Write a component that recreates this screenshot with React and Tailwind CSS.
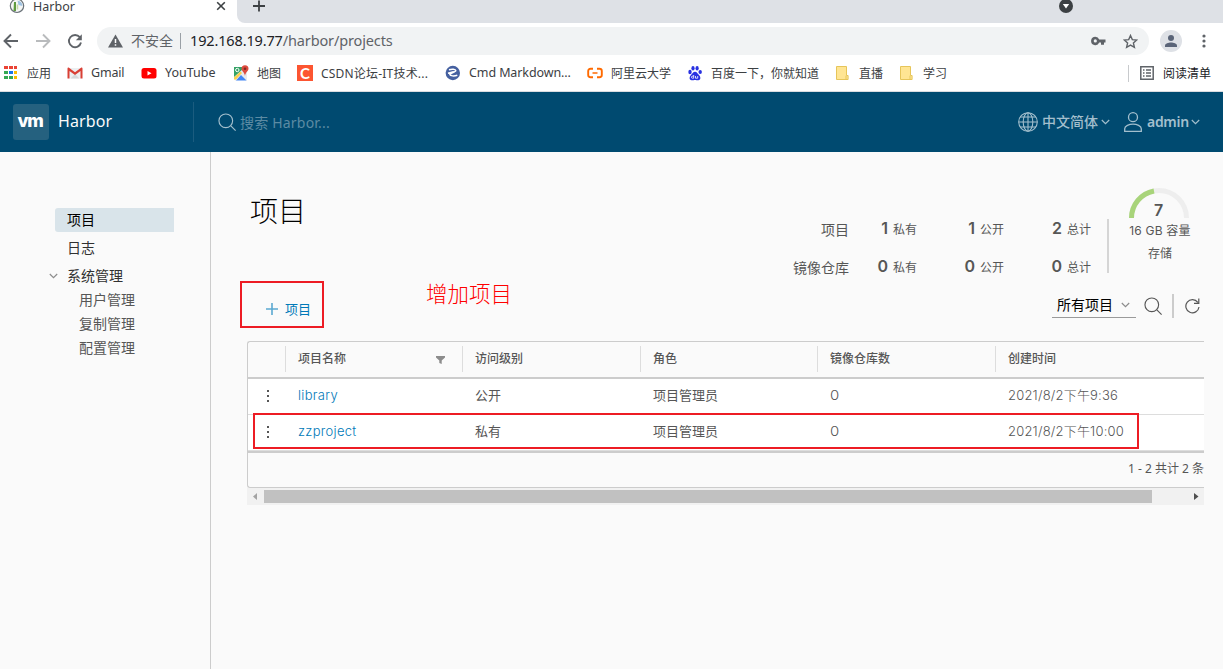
import React, { useState } from 'react';

const bookmarks = [
  { icon: 'apps', label: '应用', item: 'w-[63px]', gap: 'gap-[9px]' },
  { icon: 'gmail', label: 'Gmail', item: 'w-[74px]', gap: 'gap-2', text: 'text-[12.5px] tracking-[-0.2px]' },
  { icon: 'youtube', label: 'YouTube', item: 'w-[92px]', gap: 'gap-2', text: 'text-[12.5px]' },
  { icon: 'maps', label: '地图', item: 'w-[64px]', gap: 'gap-2' },
  { icon: 'csdn', label: 'CSDN论坛-IT技术...', item: 'w-[148px]', gap: 'gap-2', text: 'tracking-[0.2px]' },
  { icon: 'cmd', label: 'Cmd Markdown...', item: 'w-[142px]', gap: 'gap-2', text: 'text-[12.5px] tracking-[-0.1px]' },
  { icon: 'aliyun', label: '阿里云大学', item: 'w-[100px]', gap: 'gap-2' },
  { icon: 'baidu', label: '百度一下，你就知道', item: 'w-[149px]', gap: 'gap-2' },
  { icon: 'folder', label: '直播', item: 'w-[64px]', gap: 'gap-2' },
  { icon: 'folder', label: '学习', item: 'w-[64px]', gap: 'gap-2' },
];

const projects = [
  { name: 'library', access: '公开', role: '项目管理员', repos: 0, created: '2021/8/2下午9:36' },
  { name: 'zzproject', access: '私有', role: '项目管理员', repos: 0, created: '2021/8/2下午10:00' },
];

const stats = [
  { label: '项目', values: [1, 1, 2] },
  { label: '镜像仓库', values: [0, 0, 0] },
];

const statNames = ['私有', '公开', '总计'];

const BookmarkIcon = ({ name }) => {
  switch (name) {
    case 'apps':
      return (
        <svg width="14" height="14" viewBox="0 0 14 14" className="shrink-0" shapeRendering="crispEdges">
          <path fill="#ea4335" d="M0 0h4v3H0zM5 0h4v3H5zM10 0h3v3h-3z" />
          <path fill="#34a853" d="M0 5h4v3H0zM0 10h4v3H0zM5 10h4v3H5z" />
          <path fill="#1a73e8" d="M5 5h4v3H5z" />
          <path fill="#fbbc04" d="M10 5h3v3h-3zM10 10h3v3h-3z" />
        </svg>
      );
    case 'gmail':
      return (
        <svg width="16" height="16" viewBox="0 0 16 16" className="shrink-0">
          <path fill="#eceff1" d="M2 3h12v10.500H2z" />
          <path fill="#d5d8da" d="M3.500 13.500 8 9l4.500 4.500z" />
          <path fill="#d93f35" d="M.5 3.500C.5 2.500 1.300 2.200 2 2.700L8 7.300l6-4.600c.7-.5 1.500-.2 1.500.8v10h-2V6L8 10 2.500 6v7.500h-2z" />
        </svg>
      );
    case 'youtube':
      return (
        <svg width="16" height="16" viewBox="0 0 16 16" className="shrink-0">
          <rect x="0.500" y="3" width="15" height="10.500" rx="2.500" fill="#f00" />
          <path fill="#fff" d="m6.500 5.900 4 2.300-4 2.300z" />
        </svg>
      );
    case 'maps':
      return (
        <svg width="16" height="16" viewBox="0 0 16 16" className="shrink-0">
          <path fill="#34a265" d="M1 2h9l2 3-10 9-1-1z" />
          <path fill="#e8eaed" d="m1 12 9-8 4 4v7.500h-1L9 11l-5 4.500H2z" />
          <path fill="#4285f4" d="m3 15.500 5-5.500 5.500 5.500z" />
          <path fill="#fbd04b" d="m1 12.500 6.500-6L9 8l-6 6.500H1z" />
          <circle cx="4.300" cy="5" r="1.700" fill="none" stroke="#fff" />
          <path fill="#dd4b3e" d="M12 .3a3.500 3.500 0 0 1 3.500 3.500C15.500 6.300 12.600 7 12 11 11.400 7 8.500 6.300 8.500 3.800A3.500 3.500 0 0 1 12 .3z" />
          <circle cx="12" cy="3.800" r="1.300" fill="#7f2a22" />
        </svg>
      );
    case 'csdn':
      return (
        <span className="flex h-4 w-4 shrink-0 items-center justify-center bg-[#fc5531] font-['Lato'] text-[15px] leading-none font-bold text-white">
          C
        </span>
      );
    case 'cmd':
      return (
        <svg width="16" height="16" viewBox="0 0 16 16" className="shrink-0">
          <circle cx="7.800" cy="8" r="7.200" fill="#4560a0" />
          <path d="M4 4.800c3-1 6.500-.7 6.800.8.200 1.300-5.800 2.500-6 4 .5 1.500 4.500 1.700 7.500.6M3 8.200l5.500-1.500" fill="none" stroke="#fff" strokeWidth="1.500" />
        </svg>
      );
    case 'aliyun':
      return (
        <svg width="16" height="16" viewBox="0 0 16 16" className="shrink-0">
          <path d="M6 3.800H3.600Q1.200 3.800 1.200 6v4q0 2.200 2.400 2.200H6M10 3.800h2.400q2.400 0 2.400 2.200v4q0 2.200-2.400 2.200H10" fill="none" stroke="#ff6a00" strokeWidth="1.900" />
          <path d="M5.500 8h5" stroke="#ff6a00" strokeWidth="1.500" />
        </svg>
      );
    case 'baidu':
      return (
        <svg width="16" height="16" viewBox="0 0 16 16" className="shrink-0" fill="#2932e1">
          <ellipse cx="3" cy="7" rx="1.700" ry="2.200" />
          <ellipse cx="6" cy="3.300" rx="1.600" ry="2.300" />
          <ellipse cx="10.100" cy="3.300" rx="1.600" ry="2.300" />
          <ellipse cx="13.200" cy="7" rx="1.700" ry="2.100" />
          <path d="M8 6.800c2 0 2.600 2 4 3.200 1.800 1.600 2 5-.6 5.300-1.500.1-2-.3-3.400-.3s-2 .5-3.400.3C2 15 2.200 11.600 4 10c1.400-1.200 2-3.200 4-3.200z" />
          <path d="M6.700 10v3.200H5.300q-.8 0-.8-1t.8-1h1.400M8.500 11v2.200h2.200V11" fill="none" stroke="#fff" strokeWidth="0.800" />
        </svg>
      );
    default:
      return (
        <svg width="15" height="16" viewBox="0 0 15 16" className="shrink-0">
          <path d="M.5 1.500h10v9h1.600v4H.5z" fill="#ffe593" stroke="#e6c55a" />
          <path d="M10 14.500v-3.800" stroke="#e6c55a" />
        </svg>
      );
  }
};

const Caret = ({ className }) => (
  <svg width="9" height="6" viewBox="0 0 9 6" fill="none" stroke="currentColor" strokeWidth="1.200" className={className}>
    <path d="m.8 1 3.700 3.600L8.200 1" />
  </svg>
);

const SearchIcon = ({ size }) => (
  <svg width={size} height={size} viewBox="0 0 20 20" fill="none" stroke="currentColor" strokeWidth="1.200" className="shrink-0">
    <circle cx="8.200" cy="8.200" r="7.200" />
    <path d="m13.500 13.500 5 5" />
  </svg>
);

const BrowserChrome = () => (
  <div className="h-[92px] border-b border-[#dadce0] bg-white text-[#3c4043]">
    {/* Tab strip */}
    <div className="flex h-[23px]">
      <div className="flex h-[14px] w-[237px] items-center pl-[9px]">
        <svg width="16" height="14" viewBox="0 0 16 14" className="mr-2 shrink-0">
          <circle cx="8" cy="5.800" r="6.700" fill="#f4f6f5" stroke="#6a7278" strokeWidth="1.200" />
          <path d="M8.500.5A6 6 0 0 1 13.500 6L9.500 5z" fill="#9fc2e2" />
          <path d="M5 2h2v9H4.500z" fill="#5f9b3f" />
          <path d="M7.700 4.500h1.500v5H7.700z" fill="#c4d8a8" />
        </svg>
        <span className="flex-1 text-[12.500px] leading-[14px]">Harbor</span>
        <svg width="10" height="10" viewBox="0 0 10 10" stroke="#3c4043" strokeWidth="1.600" className="mr-[11px] -mt-0.5">
          <path d="m1.200 1.200 7.600 7.600M8.800 1.200 1.200 8.800" />
        </svg>
      </div>
      <div className="flex flex-1 rounded-bl-lg bg-[#dee1e6]">
        <svg width="14" height="14" viewBox="0 0 14 14" stroke="#3c4043" strokeWidth="1.800" className="ml-[15px]">
          <path d="M7 .5v11M1 6h12" />
        </svg>
        <svg width="14" height="14" viewBox="0 0 14 14" className="ml-[793px]">
          <circle cx="7" cy="6" r="7" fill="#3c4043" />
          <path d="M3.800 4h6.400L7 8.500z" fill="#fff" />
        </svg>
      </div>
    </div>

    {/* Address bar */}
    <div className="flex h-9 items-center">
      <svg width="97" height="20" viewBox="0 0 97 20" fill="none" stroke="#5f6368" strokeWidth="1.900" className="shrink-0">
        <path d="M18 10H5M11 3.500 4.500 10l6.500 6.500" />
        <path d="M36 10h13M43 3.500l6.500 6.500-6.500 6.500" stroke="#b9bbbd" />
        <path d="M79.800 6.200A6.100 6.100 0 1 0 81 11.500" />
        <path d="M81.800 3.300v6h-6z" fill="#5f6368" stroke="none" />
      </svg>
      <div className="flex h-7 w-[1052px] items-center rounded-full bg-[#f1f3f4] pl-[11px]">
        <svg width="15" height="14" viewBox="0 0 15 14" className="shrink-0">
          <path d="M7.500.5 15 13.500H0z" fill="#5f6368" />
          <path d="M7.500 5v4M7.500 10.200v1.600" stroke="#fff" strokeWidth="1.500" />
        </svg>
        <span className="ml-2 text-sm text-[#5f6368]">不安全</span>
        <span className="mr-[9px] ml-[7px] h-4 w-px bg-[#9aa0a6]" />
        <span className="text-[14.500px] tracking-[-0.140px] text-[#202124]">192.168.19.77</span>
        <span className="text-[14.500px] tracking-[-0.140px] text-[#5f6368]">/harbor/projects</span>
        <svg width="15" height="10" viewBox="0 0 15 10" className="mr-[17px] ml-auto">
          <path fillRule="evenodd" fill="#5f6368" d="M4.300.7a4.200 4.200 0 0 1 3.900 2.800H14.500v3H13v2.300h-3V6.500H8.200A4.200 4.200 0 1 1 4.300.7zm0 2.600a1.600 1.600 0 1 0 0 3.200 1.600 1.600 0 0 0 0-3.200z" />
        </svg>
        <svg width="15" height="15" viewBox="0 0 15 15" className="mr-[11px]" fill="none" stroke="#5f6368" strokeWidth="1.400">
          <path d="m7.500 1.500 1.800 4.100 4.400.4-3.300 3 1 4.400-3.900-2.300-3.900 2.300 1-4.400-3.300-3 4.400-.4z" />
        </svg>
      </div>
      <svg width="22" height="22" viewBox="0 0 22 22" className="ml-[11px]">
        <circle cx="11" cy="11" r="11" fill="#dee1e6" />
        <circle cx="11" cy="8" r="3" fill="#5a6478" />
        <path d="M5 17v-1.500c0-2 3.500-3 6-3s6 1 6 3V17z" fill="#5a6478" />
      </svg>
      <svg width="4" height="14" viewBox="0 0 4 14" className="ml-5" fill="#5f6368">
        <circle cx="2" cy="2" r="1.600" />
        <circle cx="2" cy="7" r="1.600" />
        <circle cx="2" cy="12" r="1.600" />
      </svg>
    </div>

    {/* Bookmarks bar */}
    <div className="flex h-7 items-center pl-1 text-xs whitespace-nowrap">
      {bookmarks.map((b, i) => (
        <div key={i} className={`flex shrink-0 items-center ${b.item} ${b.gap} ${b.text || ''}`}>
          <BookmarkIcon name={b.icon} />
          <span className="pt-px">{b.label}</span>
        </div>
      ))}
      <div className="ml-auto flex items-center border-l border-[#c8cacd] pr-3 pl-[11px] text-[#202124]">
        <svg width="14" height="14" viewBox="0 0 14 14" className="mr-[9px]" fill="none" stroke="#5f6368" strokeWidth="1.500">
          <path d="M.8.800h12.400v12.400H.8zM3 4h1.500M6 4h5M3 7h1.500M6 7h5M3 10h1.500M6 10h5" />
        </svg>
        <span className="pt-px">阅读清单</span>
      </div>
    </div>
  </div>
);

const Header = () => (
  <header className="flex h-[60px] items-center bg-[#004a70] pl-[13px] text-[#a3bfcd]">
    <div className="flex h-9 w-9 items-center justify-center rounded-[3px] bg-[#25617f]">
      <span className="-mt-0.5 mr-0.5 scale-x-105 font-['Inter'] text-[17px] leading-none font-extrabold tracking-[-1.200px] text-white">vm</span>
    </div>
    <span className="-mt-0.5 ml-[9px] w-[135px] text-base tracking-[0.100px] text-[#fafafa]">Harbor</span>
    <span className="h-10 w-px bg-[#1b5c7f]" />
    <div className="ml-6 flex items-center">
      <SearchIcon size={19} />
      <span className="mt-0.5 ml-[3px] text-sm tracking-[0.200px] text-[#5c8ba3]">搜索 Harbor...</span>
    </div>
    <div className="mr-[23px] ml-auto flex items-center text-sm font-semibold">
      <svg width="20" height="20" viewBox="0 0 20 20" fill="none" stroke="currentColor" strokeWidth="1.100">
        <circle cx="10" cy="10" r="9.300" />
        <ellipse cx="10" cy="10" rx="4.800" ry="9.300" />
        <path d="M10 .7v18.600M.7 10h18.600M2.300 5h15.400M2.300 15h15.400" />
      </svg>
      <span className="ml-1 font-medium">中文简体</span>
      <Caret className="ml-[3px]" />
      <svg width="18" height="20" viewBox="0 0 18 20" fill="none" stroke="currentColor" strokeWidth="1.300" className="ml-[14px]">
        <circle cx="9" cy="5.200" r="4.500" />
        <path d="M.7 19.300v-2.500c0-3 4.500-4.600 8.300-4.600s8.300 1.600 8.300 4.600v2.500z" />
      </svg>
      <span className="ml-[5px] w-[44px] tracking-[-0.300px]">admin</span>
      <Caret />
    </div>
  </header>
);

const Sidebar = () => (
  <nav className="w-[211px] shrink-0 border-r border-[#ccc] pt-14 text-sm text-[#313131]">
    <div className="ml-[55px] flex h-6 w-[119px] items-center rounded-l-[3px] bg-[#d9e4ea] pl-3 text-black">项目</div>
    <div className="mt-1 ml-[67px] flex h-6 items-center">日志</div>
    <div className="mt-1 flex h-6 items-center pl-[49px]">
      <Caret className="mr-[9px] text-[#8c8c8c]" />
      系统管理
    </div>
    <div className="pl-[79px] leading-6 text-[#565656]">
      <div>用户管理</div>
      <div>复制管理</div>
      <div>配置管理</div>
    </div>
  </nav>
);

const Statistics = () => (
  <div className="mr-[27px] flex text-[#565656]">
    <div className="mt-[57px]">
      {stats.map((row) => (
        <div key={row.label} className="flex h-[38px] items-center justify-end">
          <span className="mt-1 text-sm">{row.label}</span>
          {row.values.map((value, i) => (
            <div key={i} className={`flex items-baseline justify-end gap-[5px] ${i === 0 ? 'w-[68px]' : 'w-[87px]'}`}>
              <span className="font-['Inter'] text-base leading-5 font-semibold">{value}</span>
              <span className="text-xs">{statNames[i]}</span>
            </div>
          ))}
        </div>
      ))}
    </div>
    <div className="mt-[67px] ml-4 h-[54px] w-0.5 bg-[#d5d5d5]" />
    <div className="ml-[13px] flex w-[74px] flex-col items-center pt-9 text-xs">
      <div className="mr-px flex flex-col items-center">
        <svg width="60" height="30" viewBox="0 0 60 30" fill="none" strokeWidth="5">
          <path d="M2.500 30a27.500 27.500 0 0 1 55 0" stroke="#eee" />
          <path d="M2.500 30A27.500 27.500 0 0 1 25 3" stroke="#a8d47a" />
        </svg>
        <span className="-mt-4 font-['Inter'] text-base leading-4 font-semibold">7</span>
      </div>
      <span className="mt-1 ml-0.5 font-['Inter','Noto_Sans_CJK_SC',sans-serif] leading-[18px] tracking-[0.200px] whitespace-nowrap">16 GB 容量</span>
      <span className="mt-[5px] ml-0.5 leading-[18px]">存储</span>
    </div>
  </div>
);

const ProjectTable = () => (
  <div className="w-[957px] overflow-hidden">
    <div className="rounded-l-[3px] border border-r-0 border-[#ccc] text-[13px] whitespace-nowrap text-[#565656]">
      <div className="flex h-[37px] items-center border-b-2 border-[#ccc] pb-px font-medium">
        <div className="w-[37px] shrink-0" />
        <div className="flex h-[26px] w-[177px] items-center border-l border-[#ddd] pl-3 text-xs">
          项目名称
          <svg width="9" height="8" viewBox="0 0 9 8" fill="#8c8c8c" className="mr-[17px] ml-auto mt-px">
            <path d="M0 0h9v1.500L5.700 4.500V8l-2.400-1V4.500L0 1.500z" />
          </svg>
        </div>
        <div className="flex h-[26px] w-[178px] items-center border-l border-[#ddd] pl-3 text-xs">访问级别</div>
        <div className="flex h-[26px] w-[177px] items-center border-l border-[#ddd] pl-3 text-xs">角色</div>
        <div className="flex h-[26px] w-[178px] items-center border-l border-[#ddd] pl-3 text-xs">镜像仓库数</div>
        <div className="flex h-[26px] items-center border-l border-[#ddd] pl-3 text-xs">创建时间</div>
      </div>
      {projects.map((project) => (
        <div key={project.name} className="flex h-9 items-center border-b border-[#ddd] bg-white pb-0.5 font-['Inter','Noto_Sans_CJK_SC',sans-serif]">
          <div className="flex w-[50px] flex-col gap-[3px] pl-[19px]">
            <span className="h-0.5 w-0.5 bg-[#565656]" />
            <span className="h-0.5 w-0.5 bg-[#565656]" />
            <span className="h-0.5 w-0.5 bg-[#565656]" />
          </div>
          <a href="#" className="w-[177px] font-light tracking-[0.300px] text-[#0079b8]">{project.name}</a>
          <span className="w-[178px]">{project.access}</span>
          <span className="w-[177px]">{project.role}</span>
          <span className="w-[178px] font-light">
            <span className="inline-block origin-left scale-x-115">{project.repos}</span>
          </span>
          <span className="font-light tracking-[0.200px]">{project.created}</span>
        </div>
      ))}
      <div className="flex h-9 items-center justify-end border-t-2 border-[#ccc] pb-0.5 text-xs">
        1 - 2 共计 2 条
      </div>
    </div>
    <div className="flex h-[17px] items-center bg-[#f1f1f1]">
      <svg width="17" height="17" viewBox="0 0 17 17" fill="#a3a3a3">
        <path d="M10 5v7L6 8.500z" />
      </svg>
      <div className="h-[13px] w-[888px] bg-[#c1c1c1]" />
      <svg width="17" height="17" viewBox="0 0 17 17" fill="#505050" className="ml-auto">
        <path d="M7 5v7l4.500-3.500z" />
      </svg>
    </div>
  </div>
);

const App = () => {
  const [filter] = useState('所有项目');

  return (
    <div className="flex h-[669px] w-[1223px] flex-col overflow-hidden bg-[#fafafa] font-['Noto_Sans','Noto_Sans_CJK_SC',sans-serif]">
      <BrowserChrome />
      <Header />
      <div className="flex min-h-0 flex-1">
        <Sidebar />
        <main className="relative flex-1 pl-9">
          <div className="flex h-[130px] justify-between pl-[3px]">
            <h1 className="mt-[38px] text-[28px] leading-[42px] font-light text-black">项目</h1>
            <Statistics />
          </div>

          {/* Toolbar */}
          <div className="flex h-[59px] items-start justify-between">
            <button className="mt-[18px] ml-[19px] flex items-center gap-[7px] text-[13px] leading-[18px] text-[#0079b8]">
              <svg width="12" height="12" viewBox="0 0 12 12" stroke="#5ba9d1" strokeWidth="1.600">
                <path d="M6 0v12M0 6h12" />
              </svg>
              项目
            </button>
            <div className="mt-3 mr-[23px] flex h-6 items-center text-[#565656]">
              <div className="mr-2 flex h-[23px] w-[84px] items-center border-b border-[#9a9a9a] pb-px pl-[5px] text-sm text-black">
                {filter}
                <Caret className="ml-2 text-[#8c8c8c]" />
              </div>
              <SearchIcon size={19} />
              <span className="mr-[11px] ml-[9px] h-6 w-0.5 bg-[#ccc]" />
              <svg width="15" height="16" viewBox="0 0 15 16" fill="none" stroke="currentColor" strokeWidth="1.200">
                <path d="M12.800 4.300A6.600 6.600 0 1 0 14 9M13.800.5v4.800H9" />
              </svg>
            </div>
          </div>

          <ProjectTable />

          {/* Annotations drawn over the page */}
          <div className="absolute top-[129px] left-[29px] h-[47px] w-[84px] border-2 border-[#ed1c24]" />
          <div className="absolute top-[261px] left-[42px] h-9 w-[886px] border-2 border-[#ed1c24]" />
          <div className="absolute top-[126px] left-[215px] text-[21.500px] leading-8 font-light text-[#f00]">增加项目</div>
        </main>
      </div>
    </div>
  );
};

export default App;
